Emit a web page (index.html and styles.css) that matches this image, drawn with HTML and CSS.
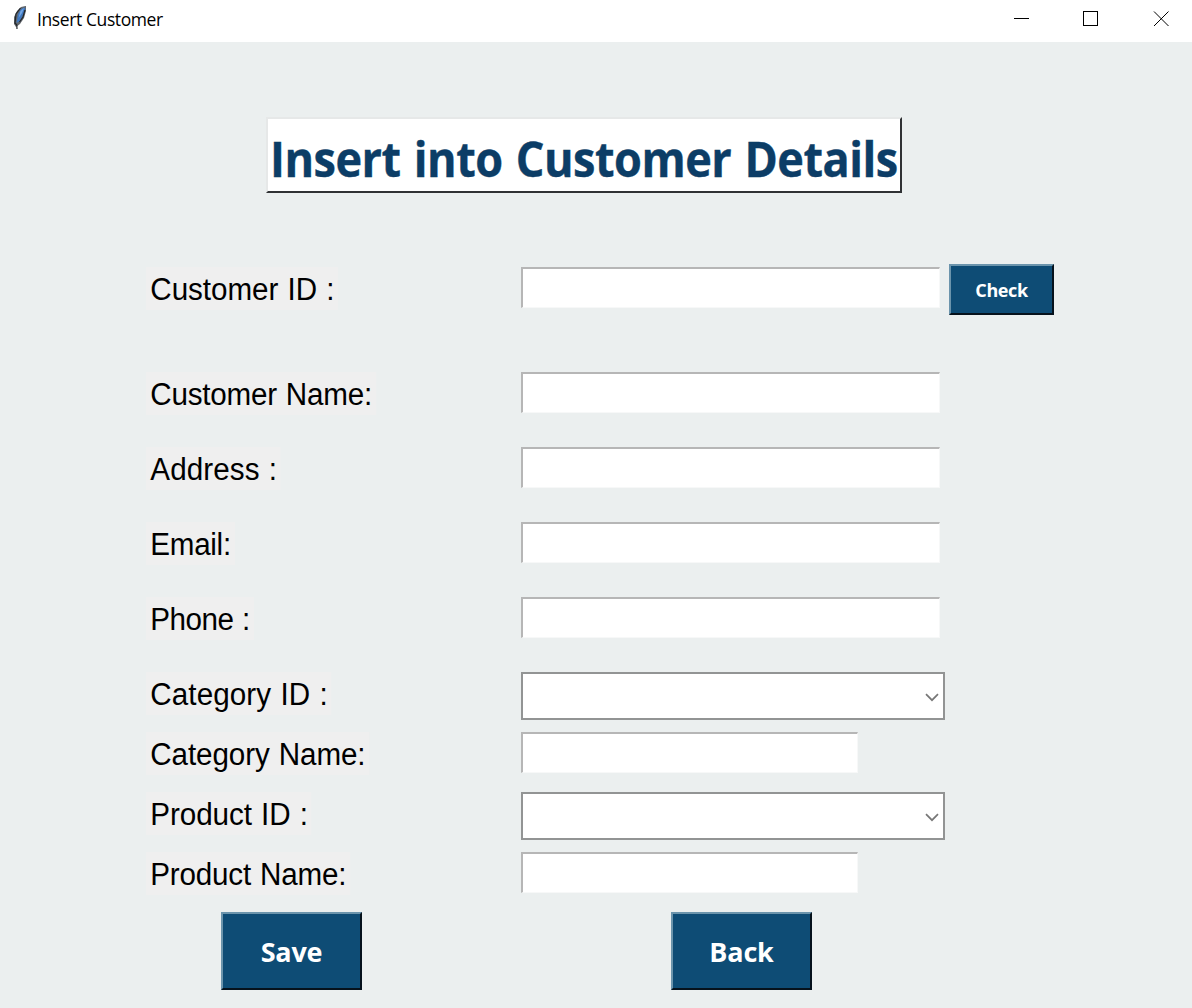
FILE: index.html
```html
<!DOCTYPE html>
<html lang="en">
<head>
<meta charset="utf-8">
<title>Insert Customer</title>
<link rel="stylesheet" href="styles.css">
</head>
<body>
<header class="titlebar">
  <svg class="feather" width="16" height="26" viewBox="0 0 16 26">
    <path d="M13.500 1 L9 2 L5 6 L2 12 L2 19 L4 22 L8 19 L12 13 L14 6 L14 1Z" fill="#62676c"/>
    <path d="M12.500 2.500 L9 4 L6 9 L4.500 18 L8 16 L11 10 L13.500 4Z" fill="#3f78c0"/>
    <path d="M12 3 L8.500 6 L6.500 13 L10 8Z" fill="#74a7e4"/>
    <path d="M8.500 3 L4 9 L3 18 L4.800 20 L5 24 M13 5 L11 12 L7.500 17" fill="none" stroke="#22262b" stroke-width="1.200"/>
  </svg>
  <span class="window-title">Insert Customer</span>
  <svg class="controls" width="156" height="16" viewBox="0 0 156 16" fill="none" stroke="#000">
    <path d="M0 7.500H15"/>
    <rect x="69.500" y=".5" width="14" height="14"/>
    <path d="M140 .5L154.500 15M154.500 .5L140 15"/>
  </svg>
</header>
<main class="window">
  <h1 class="heading"><span>Insert into Customer Details</span></h1>
  <form class="form">
    <div class="row row-id"><label class="id">Customer ID :</label><input class="entry" type="text"><button class="btn check" type="button">Check</button></div>
    <div class="row"><label class="name">Customer Name:</label><input class="entry" type="text"></div>
    <div class="row"><label class="address">Address :</label><input class="entry" type="text"></div>
    <div class="row"><label class="email">Email:</label><input class="entry" type="text"></div>
    <div class="row"><label class="phone">Phone :</label><input class="entry" type="text"></div>
    <div class="row compact"><label class="cat-id">Category ID :</label><div class="combo"><svg width="14" height="9" viewBox="0 0 14 9"><path d="M1 1.200L7 7.200L13 1.200"/></svg></div></div>
    <div class="row compact"><label class="cat-name">Category Name:</label><input class="entry short" type="text"></div>
    <div class="row compact"><label class="prod-id">Product ID :</label><div class="combo"><svg width="14" height="9" viewBox="0 0 14 9"><path d="M1 1.200L7 7.200L13 1.200"/></svg></div></div>
    <div class="row compact"><label class="prod-name">Product Name:</label><input class="entry short" type="text"></div>
    <div class="actions"><button class="btn" type="button">Save</button><button class="btn" type="button">Back</button></div>
  </form>
</main>
</body>
</html>
```
FILE: styles.css
```css
* { box-sizing: border-box; }
body { margin: 0; width: 1192px; height: 1008px; overflow: hidden; background: #ebefef; color: #000; font-family: "Open Sans", "Noto Sans", sans-serif; }
.titlebar { display: flex; align-items: flex-start; height: 42px; background: #fff; }
.feather { flex: none; margin: 5px 0 0 12px; }
.window-title { margin: 7px 0 0 9px; font-size: 17.500px; line-height: 25px; letter-spacing: -.4px; white-space: nowrap; }
.controls { flex: none; margin: 11px 22px 0 auto; }
.window { padding-top: 75px; }
.heading { display: flex; width: 636px; height: 76px; margin: 0 0 74px 266px; padding-left: 2px; background: #fff; border: 2px solid; border-color: #e6e8e8 #303234 #303234 #e6e8e8; color: #0c3d66; font-size: 48px; line-height: 80px; letter-spacing: -.5px; word-spacing: 2px; white-space: nowrap; -webkit-text-stroke: .4px #0c3d66; }
.heading span { flex: none; transform: scaleX(.938); transform-origin: left; }
.form { padding-left: 146px; }
.row { display: grid; grid-template-columns: 375px 428px auto; align-items: start; height: 75px; }
.row-id { height: 105px; }
.compact { height: 60px; }
label { justify-self: start; height: 43px; padding: 0 4px 0 4.500px; background: #efefef; font: 31px/46px "Liberation Sans", Arial, sans-serif; word-spacing: 1px; white-space: nowrap; transform: scaleX(.955); transform-origin: left; }
.id { letter-spacing: -.04px; }
.name { letter-spacing: -.23px; }
.address { letter-spacing: .1px; }
.email { letter-spacing: -.3px; }
.phone { letter-spacing: -.53px; }
.cat-id { letter-spacing: .1px; }
.cat-name { letter-spacing: -.1px; }
.prod-id { letter-spacing: -.06px; }
.prod-name { letter-spacing: -.2px; }
.entry { width: 419px; height: 41px; padding: 0 4px; background: #fff; border: solid; border-width: 2px 1px 1px 2px; border-color: #b6b6b6 #f7f8f8 #f7f8f8 #b6b6b6; border-radius: 0; outline: none; font: 24px "Liberation Sans", Arial, sans-serif; }
.short { width: 337px; }
.combo { display: flex; align-items: center; justify-content: flex-end; width: 424px; height: 48px; padding: 3px 4px 0 0; background: #fff; border: 2px solid #929494; }
.combo path { fill: none; stroke: #777; stroke-width: 1.700; }
.btn { width: 141px; height: 78px; padding: 0; background: #0e4c75; border: 2px solid; border-color: #6b94ac #06121c #06121c #6b94ac; border-radius: 0; color: #fff; font: bold 27px "Open Sans", "Noto Sans", sans-serif; letter-spacing: -.2px; }
.check { width: 105px; height: 51px; margin-top: -3px; font-size: 18px; letter-spacing: -.4px; }
.actions { display: flex; gap: 309px; padding-left: 75px; }
```
